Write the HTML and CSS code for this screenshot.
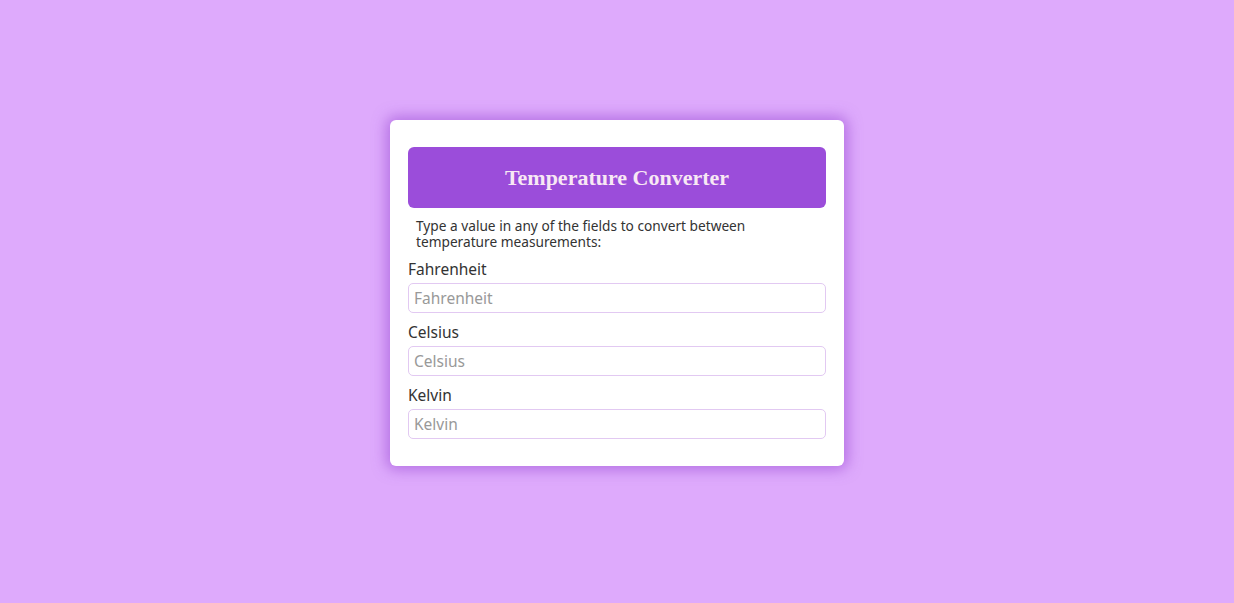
FILE: index.html
```html
<!DOCTYPE html>
<html lang="en">
<head>
<meta charset="utf-8">
<title>Temperature Converter</title>
<link rel="stylesheet" href="styles.css">
</head>
<body>
<main class="page">
  <section class="card">
    <h1 class="title">Temperature Converter</h1>
    <p class="intro">Type a value in any of the fields to convert between temperature measurements:</p>
    <div class="field">
      <label class="label" for="f">Fahrenheit</label>
      <input class="input" id="f" type="number" placeholder="Fahrenheit">
    </div>
    <div class="field">
      <label class="label" for="c">Celsius</label>
      <input class="input" id="c" type="number" placeholder="Celsius">
    </div>
    <div class="field">
      <label class="label" for="k">Kelvin</label>
      <input class="input" id="k" type="number" placeholder="Kelvin">
    </div>
  </section>
</main>
</body>
</html>
```
FILE: styles.css
```css
* { box-sizing: border-box; }
html, body { margin: 0; height: 100%; }
body {
  background: #deaafc;
  font-family: "Noto Sans", "Open Sans", sans-serif;
  color: #333;
}
.page {
  min-height: 100%;
  display: flex;
  justify-content: center;
  align-items: flex-start;
  padding-top: 120px;
}
.card {
  width: 454px;
  background: #fff;
  border-radius: 6px;
  padding: 27px 18px 27px;
  box-shadow: 0 0 14px 4px rgba(150, 70, 210, 0.55);
}
.title {
  margin: 0;
  height: 61px;
  display: flex;
  align-items: center;
  justify-content: center;
  background: #9b4dda;
  border-radius: 6px;
  color: #f8e8f4;
  font-family: "Liberation Serif", "Times New Roman", serif;
  font-weight: bold;
  font-size: 22px;
}
.intro {
  margin: 10px 0 0;
  padding: 0 8px;
  font-size: 13.7px;
  line-height: 16px;
  color: #333;
}
.field { display: flex; flex-direction: column; }
.label {
  margin-top: 8px;
  font-size: 15.5px;
  line-height: 22px;
  height: 25px;
  color: #333;
}
.field + .field .label { margin-top: 8px; }
.input {
  width: 100%;
  height: 30px;
  border: 1px solid #e2c9f2;
  border-radius: 5px;
  padding: 0 5px;
  font-family: inherit;
  font-size: 15.5px;
  color: #333;
  outline: none;
  -moz-appearance: textfield;
}
.input::placeholder { color: #999; }
.input::-webkit-outer-spin-button,
.input::-webkit-inner-spin-button { -webkit-appearance: none; margin: 0; }
```
